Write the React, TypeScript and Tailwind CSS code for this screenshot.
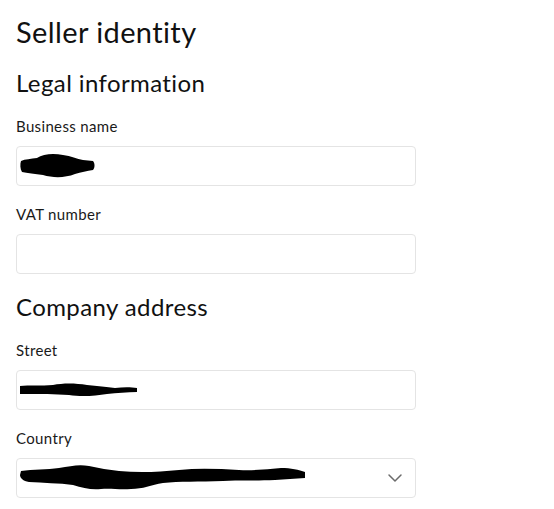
import { ChevronDown } from 'lucide-react';
import type { ReactNode } from 'react';

// redacted values, drawn as the black marker scribbles from the screenshot
function BusinessScribble() {
  return (
    <svg width="80" height="26" viewBox="0 0 80 26" className="block">
      <path
        d="M2 8 C6 6 12 6 18 5 C24 1 34 0 44 2 C52 3 58 6 64 7 L74 8 C76 10 76 15 74 17 C68 18 62 19 56 21 C46 25 34 25 24 22 C16 21 8 20 3 19 C1 16 1 11 2 8 Z"
        fill="#000"
      />
    </svg>
  );
}

function StreetScribble() {
  return (
    <svg width="120" height="16" viewBox="0 0 120 16" className="block">
      <path
        d="M1 4 C10 3 22 4 34 3 C44 1 56 1 68 3 C78 4 88 5 96 6 C104 5 112 5 118 6 L118 10 C108 10 98 11 88 12 C76 14 62 15 50 13 C36 12 20 12 8 12 L1 12 Z"
        fill="#000"
      />
    </svg>
  );
}

function CountryScribble() {
  return (
    <svg width="290" height="30" viewBox="0 0 290 30" className="block">
      <path
        d="M2 8 C14 6 28 7 40 5 C52 3 60 1 70 3 C80 5 90 7 100 8 C120 10 140 9 160 7 C180 5 200 6 220 7 C234 8 248 6 262 5 C272 5 280 7 286 9 L286 15 C276 16 266 16 256 17 C236 18 220 17 204 18 C180 19 160 18 144 20 C132 22 124 26 112 26 C100 27 92 25 82 26 C72 27 64 25 54 22 C40 20 24 20 10 19 C4 18 1 15 1 12 Z"
        fill="#000"
      />
    </svg>
  );
}

function Field({ label, children }: { label: string; children?: ReactNode }) {
  return (
    <div className="flex flex-col gap-[10px]">
      <label className="text-[15px] leading-[20px] tracking-[0.35px] text-[#1a1a1a]">{label}</label>
      <div className="h-10 w-[400px] rounded border border-[#e4e4e4] bg-white flex items-center pl-[2px] pr-2">
        {children}
      </div>
    </div>
  );
}

export default function App() {
  return (
    <div
      className="min-h-screen bg-white pl-4 pt-[14px] text-[#111] flex flex-col gap-[19px]"
      style={{ fontFamily: 'Lato, "Open Sans", sans-serif' }}
    >
      <h1 className="text-[29px] leading-[36px] tracking-[0.4px]">Seller identity</h1>

      <section className="flex flex-col gap-[19px]">
        <h2 className="text-[24px] leading-[28px] tracking-[0.4px]">Legal information</h2>
        <div className="flex flex-col gap-[18px]">
          <Field label="Business name">
            <BusinessScribble />
          </Field>
          <Field label="VAT number" />
        </div>
      </section>

      <section className="flex flex-col gap-[19px]">
        <h2 className="text-[24px] leading-[28px] tracking-[0.4px]">Company address</h2>
        <div className="flex flex-col gap-[18px]">
          <Field label="Street">
            <StreetScribble />
          </Field>
          <Field label="Country">
            <div className="flex-1">
              <CountryScribble />
            </div>
            <ChevronDown size={24} strokeWidth={1.5} className="text-[#6b6b6b]" />
          </Field>
        </div>
      </section>
    </div>
  );
}
